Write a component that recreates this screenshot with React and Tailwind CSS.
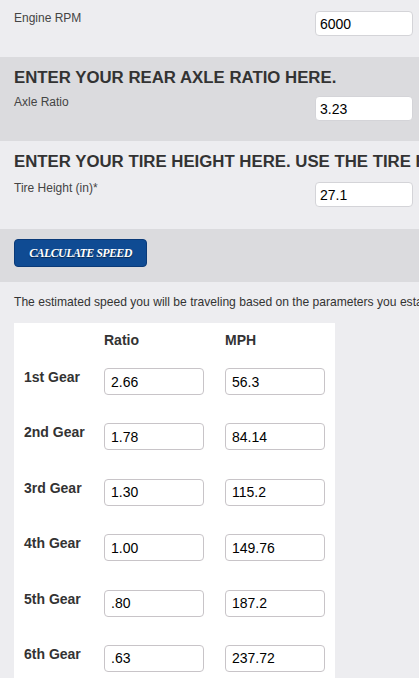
import React from "react";

const font = { fontFamily: '"Liberation Sans", Arial, sans-serif' };

function TopInput({ value }) {
  return (
    <input
      readOnly
      value={value}
      className="w-[98px] h-[25px] bg-white border border-[#d4d4d8] rounded-[4px] pl-[4px] text-[14px] text-black outline-none"
      style={font}
    />
  );
}

function CellInput({ value }) {
  return (
    <input
      readOnly
      value={value}
      className="w-[100px] h-[27px] bg-white border border-[#c8c4c8] rounded-[4px] pl-[6px] text-[14px] text-black outline-none"
      style={font}
    />
  );
}

const gears = [
  ["1st Gear", "2.66", "56.3"],
  ["2nd Gear", "1.78", "84.14"],
  ["3rd Gear", "1.30", "115.2"],
  ["4th Gear", "1.00", "149.76"],
  ["5th Gear", ".80", "187.2"],
  ["6th Gear", ".63", "237.72"],
];

export default function App() {
  return (
    <div className="w-[419px] h-[678px] overflow-hidden bg-[#ededf0] text-[#333]" style={font}>
      {/* Engine RPM */}
      <div className="h-[57px] bg-[#ededf0] flex items-start justify-between pl-[14px] pr-[6px] pt-[11px]">
        <span className="text-[12px] leading-4 text-[#444] mt-[-1px]">Engine RPM</span>
        <TopInput value="6000" />
      </div>

      {/* Axle ratio */}
      <div className="h-[84px] bg-[#dbdbde] pl-[14px] pr-[6px] pt-[11px]">
        <div className="text-[16.8px] leading-5 font-bold whitespace-nowrap text-[#333]">
          ENTER YOUR REAR AXLE RATIO HERE.
        </div>
        <div className="flex items-start justify-between mt-[8px]">
          <span className="text-[12px] leading-4 text-[#444] mt-[-2px]">Axle Ratio</span>
          <TopInput value="3.23" />
        </div>
      </div>

      {/* Tire height */}
      <div className="h-[88px] bg-[#ededf0] pl-[14px] pr-[6px] pt-[11px]">
        <div className="text-[16.8px] leading-5 font-bold whitespace-nowrap text-[#333]">
          ENTER YOUR TIRE HEIGHT HERE. USE THE TIRE HEIGHT CALCULATOR
        </div>
        <div className="flex items-start justify-between mt-[10px]">
          <span className="text-[12px] leading-4 text-[#444] mt-[-2px]">Tire Height (in)*</span>
          <TopInput value="27.1" />
        </div>
      </div>

      {/* Button */}
      <div className="h-[53px] bg-[#dbdbde] pl-[14px] pt-[10px]">
        <button
          className="w-[133px] h-[28px] bg-[#0f4b93] border border-[#0a3a78] rounded-[4px] text-white text-[12px] tracking-[-0.6px] font-bold italic flex items-center justify-center"
          style={{ fontFamily: '"Liberation Serif", "Times New Roman", serif', textShadow: "0 1px 1px rgba(0,0,0,0.5)" }}
        >
          CALCULATE SPEED
        </button>
      </div>

      {/* Results */}
      <div className="bg-[#ededf0] pl-[14px] pt-[12px]">
        <div className="text-[12.1px] leading-4 whitespace-nowrap text-[#333]">
          The estimated speed you will be traveling based on the parameters you established above is shown below.
        </div>
        <div className="mt-[13px] w-[321px] bg-white pl-[10px] pt-[9px] pb-[20px]">
          <div className="grid grid-cols-[80px_121px_100px] text-[14px] leading-4 font-bold text-[#333]">
            <span></span>
            <span>Ratio</span>
            <span>MPH</span>
          </div>
          <div className="mt-[20px] grid grid-cols-[80px_121px_100px] gap-y-[28.4px]">
            {gears.map(([g, r, m]) => (
              <React.Fragment key={g}>
                <span className="text-[14px] leading-4 font-bold text-[#333] mt-[1px]">{g}</span>
                <CellInput value={r} />
                <CellInput value={m} />
              </React.Fragment>
            ))}
          </div>
        </div>
      </div>
    </div>
  );
}
